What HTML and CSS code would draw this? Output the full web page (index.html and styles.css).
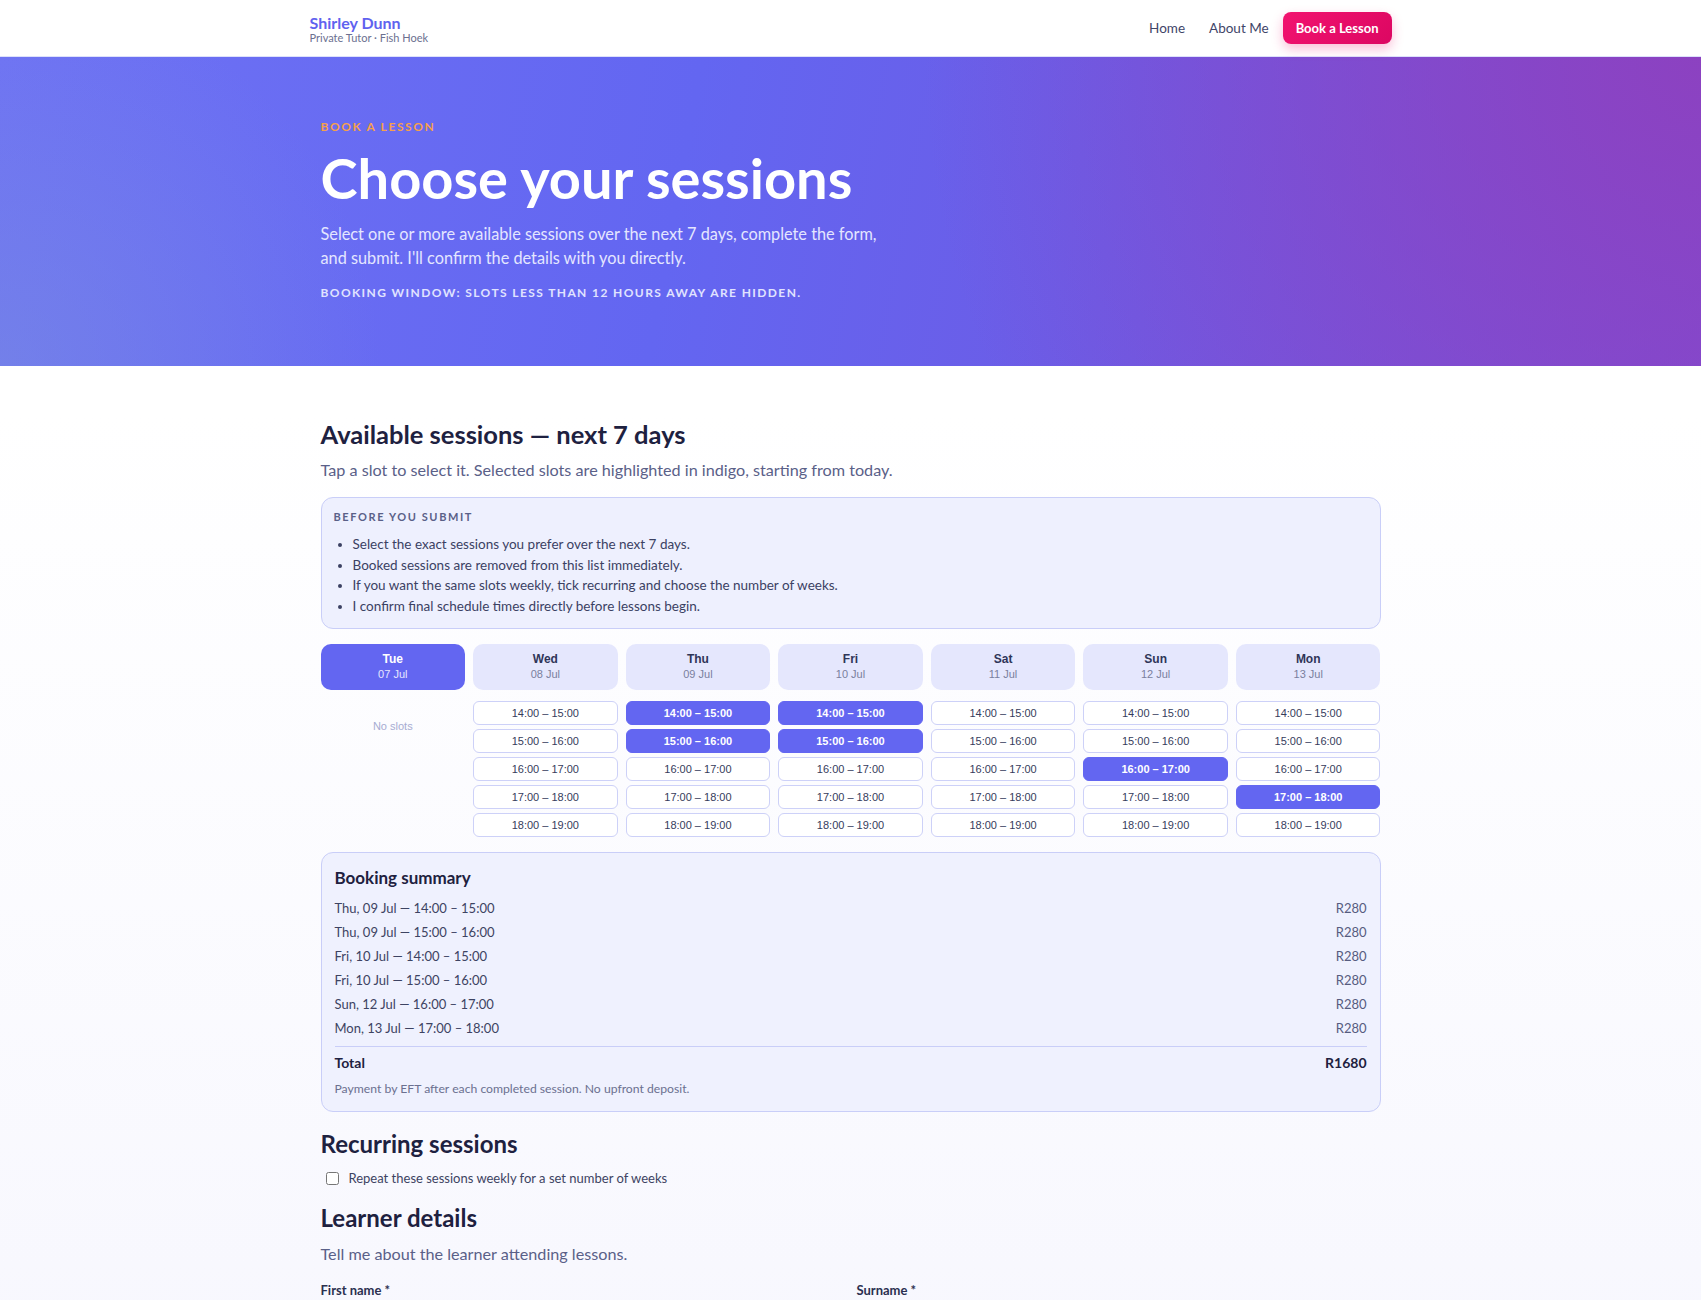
FILE: index.html
```html
<!DOCTYPE html>
<html lang="en">
<head>
    <meta charset="UTF-8">
    <meta name="viewport" content="width=device-width, initial-scale=1.0">
    <title>Shirley Dunn - Book a Lesson</title>
    <link rel="stylesheet" href="styles.css">
</head>
<body>
    <header class="site-header">
        <div class="header-inner">
            <a class="brand" href="#">
                <span class="brand-name">Shirley Dunn</span>
                <span class="brand-sub">Private Tutor · Fish Hoek</span>
            </a>
            <nav class="nav">
                <a href="#">Home</a>
                <a href="#">About Me</a>
                <a href="#" class="btn-book">Book a Lesson</a>
            </nav>
        </div>
    </header>

    <section class="hero">
        <div class="wrap">
            <p class="eyebrow">Book a lesson</p>
            <h1>Choose your sessions</h1>
            <p class="lead">Select one or more available sessions over the next 7 days, complete the form, and submit. I'll confirm the details with you directly.</p>
            <p class="window">Booking window: slots less than 12 hours away are hidden.</p>
        </div>
    </section>

    <main class="wrap main">
        <h2>Available sessions — next 7 days</h2>
        <p class="sub">Tap a slot to select it. Selected slots are highlighted in indigo, starting from today.</p>

        <div class="notice">
            <h4>Before you submit</h4>
            <ul>
                <li>Select the exact sessions you prefer over the next 7 days.</li>
                <li>Booked sessions are removed from this list immediately.</li>
                <li>If you want the same slots weekly, tick recurring and choose the number of weeks.</li>
                <li>I confirm final schedule times directly before lessons begin.</li>
            </ul>
        </div>

        <div class="week" id="week"></div>

        <div class="summary">
            <h3 class="summary-title">Booking summary</h3>
            <div id="summary-rows"></div>
            <div class="summary-total">
                <span>Total</span>
                <span id="total">R0</span>
            </div>
            <p class="note">Payment by EFT after each completed session. No upfront deposit.</p>
        </div>

        <h3 class="block-title">Recurring sessions</h3>
        <label class="check">
            <input type="checkbox">
            <span>Repeat these sessions weekly for a set number of weeks</span>
        </label>

        <h3 class="block-title learner">Learner details</h3>
        <p class="sub">Tell me about the learner attending lessons.</p>

        <div class="form-grid">
            <div class="field">
                <label for="first">First name *</label>
                <input type="text" id="first">
            </div>
            <div class="field">
                <label for="last">Surname *</label>
                <input type="text" id="last">
            </div>
        </div>
    </main>

    <script>
        const precio = 280;
        const dias = [
            { dia: "Tue", fecha: "07 Jul", slots: [] },
            { dia: "Wed", fecha: "08 Jul" },
            { dia: "Thu", fecha: "09 Jul" },
            { dia: "Fri", fecha: "10 Jul" },
            { dia: "Sat", fecha: "11 Jul" },
            { dia: "Sun", fecha: "12 Jul" },
            { dia: "Mon", fecha: "13 Jul" }
        ];
        const horas = ["14:00 – 15:00", "15:00 – 16:00", "16:00 – 17:00", "17:00 – 18:00", "18:00 – 19:00"];

        let seleccion = ["2-0", "2-1", "3-0", "3-1", "5-2", "6-3"];

        function pintarSemana() {
            const week = document.getElementById("week");
            week.innerHTML = "";
            dias.forEach((d, i) => {
                const lista = d.slots ? d.slots : horas;
                let html = `<div class="day">
                    <div class="day-tab${i === 0 ? " active" : ""}">
                        <strong>${d.dia}</strong>
                        <span>${d.fecha}</span>
                    </div>
                    <div class="slots">`;
                if (lista.length === 0) {
                    html += `<p class="no-slots">No slots</p>`;
                }
                lista.forEach((h, j) => {
                    const key = `${i}-${j}`;
                    const sel = seleccion.includes(key) ? " selected" : "";
                    html += `<button class="slot${sel}" onclick="toggleSlot('${key}')">${h}</button>`;
                });
                html += `</div></div>`;
                week.innerHTML += html;
            });
            pintarResumen();
        }

        function toggleSlot(key) {
            if (seleccion.includes(key)) {
                seleccion = seleccion.filter(k => k !== key);
            } else {
                seleccion.push(key);
            }
            seleccion.sort();
            pintarSemana();
        }

        function pintarResumen() {
            const rows = document.getElementById("summary-rows");
            rows.innerHTML = "";
            seleccion.forEach(key => {
                const [i, j] = key.split("-").map(Number);
                rows.innerHTML += `<div class="summary-row"><span>${dias[i].dia}, ${dias[i].fecha} — ${horas[j]}</span><span>R${precio}</span></div>`;
            });
            document.getElementById("total").textContent = `R${precio * seleccion.length}`;
        }

        pintarSemana();
    </script>
</body>
</html>
```

FILE: styles.css
```css
* {
    margin: 0;
    padding: 0;
    box-sizing: border-box;
}
body {
    font-family: 'Lato', 'Open Sans', sans-serif;
    color: #1e2140;
    background: linear-gradient(#ffffff 30%, #f7f7fe);
    min-height: 100vh;
}
a {
    text-decoration: none;
}
.wrap {
    max-width: 1060px;
    margin: 0 auto;
}

/* header */
.site-header {
    background: #fff;
    border-bottom: 1px solid #dde1fb;
    height: 57px;
}
.header-inner {
    max-width: 1082px;
    height: 100%;
    margin: 0 auto;
    display: flex;
    align-items: center;
    justify-content: space-between;
}
.brand {
    display: flex;
    flex-direction: column;
    margin-top: 1px;
}
.brand-name {
    color: #5f62ef;
    font-weight: 700;
    font-size: 16px;
    line-height: 18px;
}
.brand-sub {
    color: #6b7090;
    font-size: 11px;
    line-height: 12px;
}
.nav {
    display: flex;
    align-items: center;
    gap: 24px;
}
.nav a {
    color: #3f4568;
    font-size: 13.5px;
}
.nav .btn-book {
    background: linear-gradient(135deg, #f2136f, #dc0762);
    color: #fff;
    font-weight: 700;
    font-size: 13px;
    height: 32px;
    line-height: 32px;
    padding: 0 13px;
    border-radius: 8px;
    margin-left: -10px;
    box-shadow: 0 5px 12px rgba(236, 22, 110, 0.28);
}

/* hero */
.hero {
    background:
        radial-gradient(circle at 0% 100%, rgba(120, 140, 225, 0.55), transparent 22%),
        radial-gradient(circle at 100% 0%, rgba(142, 64, 190, 0.9), transparent 45%),
        linear-gradient(100deg, #6e72f4 0%, #6366f1 40%, #6c5ce6 65%, #7b4fd8 100%);
    color: #fff;
    padding: 62px 0 65px;
}
.eyebrow {
    color: #f5a04a;
    font-size: 12px;
    font-weight: 700;
    line-height: 16px;
    letter-spacing: 1.6px;
    text-transform: uppercase;
}
.hero h1 {
    font-size: 56px;
    line-height: 64px;
    font-weight: 700;
    margin-top: 11px;
}
.lead {
    font-size: 16.3px;
    line-height: 24px;
    color: #e4e6ff;
    max-width: 575px;
    margin-top: 12px;
}
.window {
    font-size: 12px;
    line-height: 16px;
    font-weight: 700;
    letter-spacing: 1.4px;
    text-transform: uppercase;
    color: #e0e3ff;
    margin-top: 15px;
}

/* main */
.main {
    padding: 52px 0 40px;
}
.main h2 {
    font-size: 25.5px;
    line-height: 32px;
    font-weight: 700;
}
.sub {
    font-size: 16.2px;
    line-height: 24px;
    color: #5a6088;
    margin-top: 8px;
}
.notice {
    margin-top: 15px;
    background: #eef0fe;
    border: 1px solid #c9cef8;
    border-radius: 12px;
    padding: 12px 12px 12px;
}
.notice h4 {
    font-size: 11px;
    line-height: 14px;
    letter-spacing: 1.6px;
    text-transform: uppercase;
    color: #5a6088;
}
.notice ul {
    margin-top: 10px;
    padding-left: 19px;
}
.notice li {
    font-size: 13.5px;
    line-height: 20.5px;
    color: #3b4163;
}

/* week */
.week {
    display: grid;
    grid-template-columns: repeat(7, 1fr);
    gap: 8px;
    margin-top: 15px;
}
.day-tab {
    background: #e5e7fd;
    border-radius: 10px;
    height: 46px;
    padding-top: 7px;
    text-align: center;
    font-family: 'Liberation Sans', Arial, sans-serif;
    color: #2f3558;
}
.day-tab strong {
    display: block;
    font-size: 12px;
    line-height: 16px;
}
.day-tab span {
    display: block;
    font-size: 11px;
    line-height: 15px;
    color: #7a7f9e;
}
.day-tab.active {
    background: #6366f1;
    color: #fff;
}
.day-tab.active span {
    color: #e6e7ff;
}
.slots {
    display: flex;
    flex-direction: column;
    gap: 4px;
    margin-top: 11px;
}
.slot {
    height: 24px;
    background: #fff;
    border: 1px solid #cdd1f8;
    border-radius: 6px;
    font-family: 'Liberation Sans', Arial, sans-serif;
    font-size: 11px;
    color: #363c5c;
    cursor: pointer;
}
.slot.selected {
    background: #6366f1;
    border-color: #6366f1;
    color: #fff;
    font-weight: 700;
}
.no-slots {
    text-align: center;
    font-family: 'Liberation Sans', Arial, sans-serif;
    font-size: 11px;
    line-height: 16px;
    color: #a7acd2;
    padding-top: 17px;
}

/* summary */
.summary {
    margin-top: 15px;
    background: #eff1fe;
    border: 1px solid #c9cef8;
    border-radius: 12px;
    padding: 14px 13px 14px;
}
.summary-title {
    font-size: 17px;
    line-height: 22px;
    font-weight: 700;
    margin-bottom: 7px;
}
.summary-row {
    display: flex;
    justify-content: space-between;
    font-size: 13px;
    line-height: 24px;
    color: #3d4362;
}
.summary-row span:last-child {
    color: #565c80;
}
.summary-total {
    display: flex;
    justify-content: space-between;
    border-top: 1px solid #c9cef8;
    margin-top: 6px;
    padding-top: 6px;
    font-size: 14px;
    line-height: 20px;
    font-weight: 700;
}
.note {
    margin-top: 8px;
    font-size: 12.2px;
    line-height: 16px;
    color: #6b7090;
}

.block-title {
    font-size: 24px;
    line-height: 28px;
    font-weight: 700;
    margin-top: 18px;
}
.block-title.learner {
    margin-top: 16px;
}
.check {
    display: flex;
    align-items: center;
    gap: 10px;
    margin-top: 10px;
    font-size: 13px;
    line-height: 20px;
    color: #3d4362;
}
.check input {
    width: 13px;
    height: 13px;
    margin-left: 5px;
}
.learner + .sub {
    margin-top: 10px;
}
.form-grid {
    display: grid;
    grid-template-columns: 1fr 1fr;
    gap: 12px;
    margin-top: 15px;
}
.field label {
    display: block;
    font-size: 13px;
    line-height: 18px;
    font-weight: 700;
    color: #2b3050;
}
.field input {
    width: 100%;
    height: 40px;
    margin-top: 6px;
    border: 1px solid #c9cef8;
    border-radius: 8px;
    background: #fff;
}
```
